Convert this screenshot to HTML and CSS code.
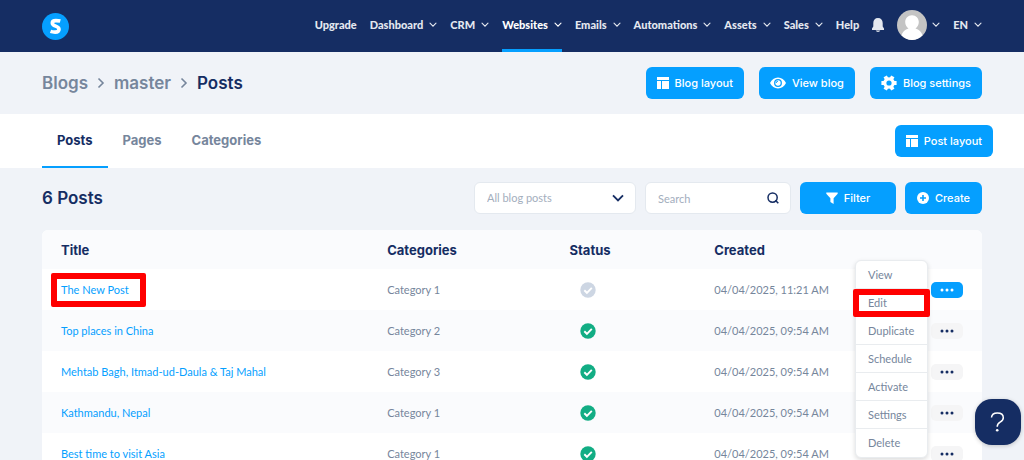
FILE: index.html
```html
<!DOCTYPE html>
<html lang="en">
<head>
<meta charset="utf-8">
<title>Posts</title>
<link rel="stylesheet" href="styles.css">
</head>
<body>
<svg class="sprite" aria-hidden="true">
  <symbol id="chev" viewBox="0 0 8 6"><path d="M1 1.2 4 4.2 7 1.2" fill="none" stroke="currentColor" stroke-width="1.100" stroke-linecap="round"/></symbol>
  <symbol id="layout" viewBox="0 0 12 12"><path d="M0 0h12v3H0zM0 4h4v8H0zM5 4h7v8H5z" fill="currentColor"/></symbol>
  <symbol id="check" viewBox="0 0 16 16"><circle cx="8" cy="8" r="7.7" fill="currentColor"/><path d="m4.300 8.300 2.600 2.500 4.900-5" fill="none" stroke="#fff" stroke-width="1.900"/></symbol>
  <symbol id="dots" viewBox="0 0 14 4"><path d="M.5 2a1.500 1.500 0 1 0 3 0 1.500 1.500 0 1 0-3 0M5.500 2a1.500 1.500 0 1 0 3 0 1.500 1.500 0 1 0-3 0M10.500 2a1.500 1.500 0 1 0 3 0 1.500 1.500 0 1 0-3 0" fill="currentColor"/></symbol>
</svg>

<header class="topbar">
  <a class="logo" href="#" aria-label="Home">
    <svg viewBox="0 0 27 27" width="27" height="27"><circle cx="13.500" cy="13.500" r="13.500" fill="#059fff"/><path d="M18.300 8.100c-1.400-.4-2.800-.5-4.400-.5-2.500 0-3.600.9-3.600 2.400 0 3.700 6.700 2.600 6.700 6.200 0 1.900-1.500 2.900-3.900 2.900-1.600 0-3.200-.2-4.600-.7" fill="none" stroke="#fff" stroke-width="3.600"/></svg>
  </a>
  <nav class="nav">
    <a href="#">Upgrade</a>
    <a href="#">Dashboard<svg class="chev"><use href="#chev"/></svg></a>
    <a href="#">CRM<svg class="chev"><use href="#chev"/></svg></a>
    <a href="#" class="current">Websites<svg class="chev"><use href="#chev"/></svg></a>
    <a href="#">Emails<svg class="chev"><use href="#chev"/></svg></a>
    <a href="#">Automations<svg class="chev"><use href="#chev"/></svg></a>
    <a href="#">Assets<svg class="chev"><use href="#chev"/></svg></a>
    <a href="#">Sales<svg class="chev"><use href="#chev"/></svg></a>
    <a href="#">Help</a>
    <a href="#" aria-label="Notifications"><svg class="bell" viewBox="0 0 12 14"><path d="M6 0C3 0 1.300 2.100 1.300 4.900v3.600L0 10.600V12h12v-1.400l-1.300-2.100V4.900C10.700 2.100 9 0 6 0zM3.700 12.600h4.600c-.3.900-1.200 1.400-2.300 1.400s-2-.5-2.300-1.400z" fill="currentColor"/></svg></a>
    <a href="#" class="account" aria-label="Account"><svg class="avatar" viewBox="0 0 30 30"><circle cx="15" cy="15" r="15" fill="#c4c4c4"/><path d="M15 5.200c4 0 6.800 2.900 6.800 6.900 0 3-1.400 5.200-3.300 6.300 3.500.9 6.100 3.700 7 6.800A15 15 0 0 1 15 30 15 15 0 0 1 4.500 25.200c.9-3.100 3.500-5.900 7-6.800-1.900-1.100-3.300-3.300-3.300-6.300 0-4 2.800-6.900 6.800-6.900z" fill="#fff"/></svg><svg class="chev"><use href="#chev"/></svg></a>
    <a href="#">EN<svg class="chev"><use href="#chev"/></svg></a>
  </nav>
</header>

<section class="heading">
  <nav class="crumbs" aria-label="Breadcrumb">
    <a href="#">Blogs</a>
    <svg viewBox="0 0 8 12"><path d="m1.500 1.500 4.500 4.500-4.500 4.500" fill="none" stroke="currentColor" stroke-width="1.600"/></svg>
    <a href="#">master</a>
    <svg viewBox="0 0 8 12"><path d="m1.500 1.500 4.500 4.500-4.500 4.500" fill="none" stroke="currentColor" stroke-width="1.600"/></svg>
    <span class="here">Posts</span>
  </nav>
  <div class="actions">
    <button class="btn"><svg width="12" height="12"><use href="#layout"/></svg>Blog layout</button>
    <button class="btn"><svg width="16" height="12" viewBox="0 0 16 12"><path d="M8 .5C4.500.5 1.600 2.800 0 6c1.600 3.200 4.500 5.500 8 5.500s6.400-2.300 8-5.500C14.400 2.800 11.500.5 8 .5z" fill="#fff"/><circle cx="8" cy="6" r="3.300" fill="#fff" stroke="#059fff" stroke-width="1.300"/><path d="M6.200 6A1.800 1.800 0 0 1 8 4.200" fill="none" stroke="#059fff" stroke-width="1"/></svg>View blog</button>
    <button class="btn"><svg width="16" height="16" viewBox="0 0 16 16"><g fill="none" stroke="#fff"><circle cx="8" cy="8" r="4.200" stroke-width="3.200"/><path d="M.4 8h3M12.600 8h3M4.200 1.400l1.500 2.600M10.300 12l1.500 2.600M11.800 1.400 10.300 4M5.700 12l-1.500 2.600" stroke-width="3.800"/></g></svg>Blog settings</button>
  </div>
</section>

<section class="tabbar">
  <nav class="tabs">
    <a href="#" class="active">Posts</a>
    <a href="#">Pages</a>
    <a href="#">Categories</a>
  </nav>
  <button class="btn"><svg width="12" height="12"><use href="#layout"/></svg>Post layout</button>
</section>

<main class="content">
  <div class="toolbar">
    <h1>6 Posts</h1>
    <div class="tools">
      <div class="field">
        <select class="filter-select" aria-label="Post type"><option>All blog posts</option></select>
        <svg width="12" height="8" viewBox="0 0 12 8"><path d="m1 1.300 5 5 5-5" fill="none" stroke="currentColor" stroke-width="1.900"/></svg>
      </div>
      <div class="field">
        <input class="search" type="text" placeholder="Search" aria-label="Search">
        <svg width="12" height="12" viewBox="0 0 12 12"><circle cx="5.600" cy="5.600" r="4.600" fill="none" stroke="currentColor" stroke-width="1.500"/><path d="m8.300 8.300 3 3" stroke="currentColor" stroke-width="1.600"/></svg>
      </div>
      <button class="btn wide"><svg width="12" height="12" viewBox="0 0 12 12"><path d="M.3.500h11.400v1.200L7.600 6.300V12L4.400 10V6.300L.3 1.700z" fill="#fff"/></svg>Filter</button>
      <button class="btn create"><svg width="12" height="12" viewBox="0 0 12 12"><circle cx="6" cy="6" r="6" fill="#fff"/><path d="M6 3v6M3 6h6" stroke="#059fff" stroke-width="1.600"/></svg>Create</button>
    </div>
  </div>

  <table class="posts">
    <colgroup><col class="c-title"><col class="c-cat"><col class="c-status"><col class="c-created"><col></colgroup>
    <thead><tr><th>Title</th><th>Categories</th><th>Status</th><th>Created</th><th></th></tr></thead>
    <tbody>
      <tr>
        <td><a class="marked" href="#">The New Post</a></td><td>Category 1</td><td class="status off"><svg><use href="#check"/></svg></td><td>04/04/2025, 11:21 AM</td>
        <td class="more">
          <button class="dots open" aria-label="More"><svg><use href="#dots"/></svg></button>
          <div class="menu">
            <button>View</button>
            <button class="marked-item">Edit</button>
            <button>Duplicate</button>
            <button>Schedule</button>
            <button>Activate</button>
            <button>Settings</button>
            <button>Delete</button>
          </div>
        </td>
      </tr>
      <tr><td><a href="#">Top places in China</a></td><td>Category 2</td><td class="status"><svg><use href="#check"/></svg></td><td>04/04/2025, 09:54 AM</td><td class="more"><button class="dots" aria-label="More"><svg><use href="#dots"/></svg></button></td></tr>
      <tr><td><a href="#">Mehtab Bagh, Itmad-ud-Daula &amp; Taj Mahal</a></td><td>Category 3</td><td class="status"><svg><use href="#check"/></svg></td><td>04/04/2025, 09:54 AM</td><td class="more"><button class="dots" aria-label="More"><svg><use href="#dots"/></svg></button></td></tr>
      <tr><td><a href="#">Kathmandu, Nepal</a></td><td>Category 1</td><td class="status"><svg><use href="#check"/></svg></td><td>04/04/2025, 09:54 AM</td><td class="more"><button class="dots" aria-label="More"><svg><use href="#dots"/></svg></button></td></tr>
      <tr><td><a href="#">Best time to visit Asia</a></td><td>Category 1</td><td class="status"><svg><use href="#check"/></svg></td><td>04/04/2025, 09:54 AM</td><td class="more"><button class="dots" aria-label="More"><svg><use href="#dots"/></svg></button></td></tr>
    </tbody>
  </table>
</main>

<button class="help" aria-label="Help"><svg width="16" height="20" viewBox="0 0 16 20"><path d="M1.500 5.500C1.700 2.700 4.200 1 7.300 1c3.400 0 6 1.700 6 4.700 0 2.400-1.500 3.400-3.200 4.500-1.900 1.200-2.900 2-2.900 4.500" fill="none" stroke="#fff" stroke-width="1.500"/><circle cx="7.200" cy="18.200" r="1.300" fill="#fff"/></svg></button>
</body>
</html>
```
FILE: styles.css
```css
* { box-sizing: border-box; }

body {
  margin: 0;
  height: 100vh;
  overflow: hidden;
  background: #f0f3f8;
  color: #76869c;
  font-family: "Lato", sans-serif;
  font-size: 11px;
  line-height: 16px;
}

a { color: inherit; text-decoration: none; }
button, input, select { font: inherit; }
button { cursor: pointer; border: 0; }
svg { display: block; flex: none; }
.sprite { position: absolute; width: 0; height: 0; }

.topbar {
  display: flex;
  align-items: center;
  justify-content: space-between;
  height: 52px;
  padding: 0 42px;
  background: #152d63;
}
.nav {
  display: flex;
  align-self: stretch;
  gap: 13px;
  color: #e4e8f0;
  font-weight: 900;
}
.nav a {
  display: flex;
  align-items: center;
  gap: 6px;
  border-bottom: 3px solid transparent;
}
.nav .current { color: #fff; border-color: #059fff; }
.chev { width: 8px; height: 6px; }
.bell { width: 12px; height: 14px; }
.nav .account { gap: 5px; }
.avatar { width: 30px; height: 30px; }

.heading {
  display: flex;
  align-items: center;
  justify-content: space-between;
  height: 62px;
  padding: 0 42px;
}
.crumbs {
  display: flex;
  align-items: center;
  gap: 9px;
  font-family: "Inter", sans-serif;
  font-size: 17px;
  font-weight: 600;
  line-height: 24px;
}
.crumbs svg { width: 8px; height: 12px; }
.here { color: #152d63; }
.actions { display: flex; gap: 15px; }

.btn {
  display: flex;
  align-items: center;
  justify-content: center;
  gap: 6px;
  height: 32px;
  padding: 0 11px;
  border-radius: 6px;
  background: #059fff;
  color: #fff;
  font-family: "Inter", sans-serif;
  font-size: 11px;
  font-weight: 500;
}

.tabbar {
  display: flex;
  align-items: center;
  justify-content: space-between;
  height: 54px;
  padding: 0 31px 0 42px;
  background: #fff;
}
.tabs {
  display: flex;
  align-self: stretch;
  font-family: "Inter", sans-serif;
  font-size: 13px;
  font-weight: 700;
}
.tabs a {
  display: flex;
  align-items: center;
  padding: 0 15px;
  border-bottom: 2px solid transparent;
}
.tabs .active { color: #152d63; border-color: #059fff; }

.content { padding: 14px 42px 0; }
.toolbar {
  display: flex;
  align-items: center;
  justify-content: space-between;
  margin-bottom: 16px;
}
h1 {
  margin: 0;
  color: #152d63;
  font-family: "Inter", sans-serif;
  font-size: 17px;
  font-weight: 600;
  line-height: 24px;
}
.tools { display: flex; gap: 9px; }
.field { display: grid; align-items: center; color: #152d63; }
.field > * { grid-area: 1 / 1; }
.field svg { justify-self: end; margin-right: 12px; pointer-events: none; }
.filter-select, .search {
  height: 32px;
  padding: 0 12px;
  border: 1px solid #e4e9ef;
  border-radius: 6px;
  background: #fff;
  color: #a3aebd;
  appearance: none;
}
.filter-select { width: 162px; }
.search { width: 146px; }
.search::placeholder { color: #a3aebd; }
.wide { width: 96px; }
.create { width: 77px; }

.posts {
  width: 100%;
  table-layout: fixed;
  border-spacing: 0;
  background: #fff;
  border-radius: 6px;
}
.c-title { width: 34.7%; }
.c-cat { width: 19.4%; }
.c-status { width: 15.4%; }
.c-created { width: 17%; }
.posts th, .posts td { padding: 0 19px; text-align: left; }
.posts th {
  height: 39px;
  background: #fafbfd;
  color: #152d63;
  font-family: "Inter", sans-serif;
  font-size: 13px;
  font-weight: 700;
}
.posts th:first-child { border-top-left-radius: 6px; }
.posts th:last-child { border-top-right-radius: 6px; }
.posts td { height: 41px; white-space: nowrap; }
.posts tbody tr:nth-child(even) { background: #fafbfd; }
.posts td a { color: #059fff; }
.posts .marked {
  display: inline-block;
  margin-left: -10px;
  padding: 3px 11px 3px 4px;
  border: 6px solid #f00;
  border-radius: 2px;
}
.posts .status { padding-left: 29px; color: #12ad84; }
.posts .off { color: #cdd6e3; }
.status svg { width: 16px; height: 16px; }

.more { position: relative; }
.dots {
  display: flex;
  align-items: center;
  justify-content: center;
  width: 32px;
  height: 16px;
  margin-left: auto;
  padding: 0;
  border-radius: 5px;
  background: #f5f5f6;
  color: #152d63;
}
.dots svg { width: 14px; height: 4px; }
.open { background: #059fff; color: #fff; }

.menu {
  position: absolute;
  z-index: 2;
  top: -9px;
  right: 54px;
  width: 73px;
  border: 1px solid #e9ecef;
  border-radius: 6px;
  background: #fff;
  box-shadow: 0 2px 5px rgba(0, 0, 0, .14);
}
.menu button {
  position: relative;
  display: block;
  width: 100%;
  height: 28px;
  padding: 0 12px;
  border-bottom: 1px solid #e9ecef;
  background: none;
  color: #76869c;
  text-align: left;
}
.menu button:last-child { border-bottom: 0; }
.menu .marked-item::after {
  content: "";
  position: absolute;
  inset: 0 -3px -1px;
  border: 6px solid #f00;
  border-radius: 2px;
}

.help {
  position: fixed;
  right: 3px;
  bottom: 15px;
  display: flex;
  align-items: center;
  justify-content: center;
  width: 46px;
  height: 46px;
  border-radius: 17px;
  background: #152d63;
  box-shadow: 0 1px 4px rgba(0, 0, 0, .2);
}
```
